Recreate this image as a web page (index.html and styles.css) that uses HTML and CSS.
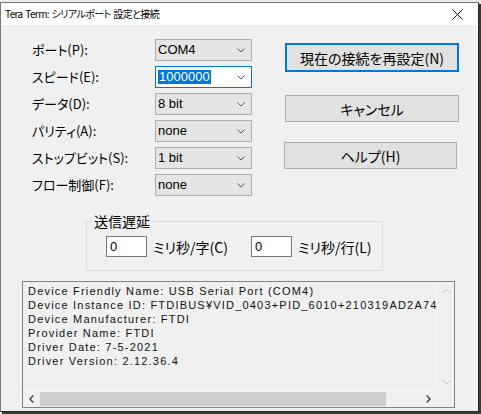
FILE: index.html
```html
<!DOCTYPE html>
<html lang="ja">
<head>
<meta charset="utf-8">
<title>Tera Term: シリアルポート 設定と接続</title>
<link rel="stylesheet" href="styles.css">
</head>
<body>
<div class="window">
  <div class="titlebar">
    <span class="title">Tera Term: シリアルポート 設定と接続</span>
    <svg class="close" width="11" height="11" viewBox="0 0 11 11"><path d="M0.5 0.5 L10.5 10.5 M10.5 0.5 L0.5 10.5" stroke="#111" stroke-width="1" fill="none"/></svg>
  </div>
  <div class="client">
    <div class="top">
      <div class="form">
        <span class="label">ポート(P):</span>
        <div class="combo"><span class="val">COM4</span><svg class="chev" width="8" height="5" viewBox="0 0 8 5"><path d="M0.5 0.5 L4 4 L7.5 0.5" stroke="#555" fill="none"/></svg></div>
        <span class="label">スピード(E):</span>
        <div class="combo edit"><span class="val"><span class="sel">1000000</span></span><svg class="chev" width="8" height="5" viewBox="0 0 8 5"><path d="M0.5 0.5 L4 4 L7.5 0.5" stroke="#555" fill="none"/></svg></div>
        <span class="label">データ(D):</span>
        <div class="combo"><span class="val">8 bit</span><svg class="chev" width="8" height="5" viewBox="0 0 8 5"><path d="M0.5 0.5 L4 4 L7.5 0.5" stroke="#555" fill="none"/></svg></div>
        <span class="label">パリティ(A):</span>
        <div class="combo"><span class="val">none</span><svg class="chev" width="8" height="5" viewBox="0 0 8 5"><path d="M0.5 0.5 L4 4 L7.5 0.5" stroke="#555" fill="none"/></svg></div>
        <span class="label">ストップビット(S):</span>
        <div class="combo"><span class="val">1 bit</span><svg class="chev" width="8" height="5" viewBox="0 0 8 5"><path d="M0.5 0.5 L4 4 L7.5 0.5" stroke="#555" fill="none"/></svg></div>
        <span class="label">フロー制御(F):</span>
        <div class="combo"><span class="val">none</span><svg class="chev" width="8" height="5" viewBox="0 0 8 5"><path d="M0.5 0.5 L4 4 L7.5 0.5" stroke="#555" fill="none"/></svg></div>
      </div>
      <div class="buttons">
        <div class="btn default">現在の接続を再設定(N)</div>
        <div class="btn cancel">キャンセル</div>
        <div class="btn help">ヘルプ(H)</div>
      </div>
    </div>
    <fieldset class="delay">
      <legend>送信遅延</legend>
      <div class="delay-row">
        <div class="num">0</div><span class="unit first">ミリ秒/字(C)</span>
        <div class="num second">0</div><span class="unit">ミリ秒/行(L)</span>
      </div>
    </fieldset>
    <div class="info">
      <div class="info-text">Device Friendly Name: USB Serial Port (COM4)
Device Instance ID: FTDIBUS¥VID_0403+PID_6010+210319AD2A74E
Device Manufacturer: FTDI
Provider Name: FTDI
Driver Date: 7-5-2021
Driver Version: 2.12.36.4</div>
      <div class="vscroll">
        <svg width="9" height="6" viewBox="0 0 9 6"><path d="M0.5 5 L4.5 1 L8.5 5" stroke="#c2c2c2" fill="none"/></svg>
        <svg width="9" height="6" viewBox="0 0 9 6"><path d="M0.5 1 L4.5 5 L8.5 1" stroke="#c2c2c2" fill="none"/></svg>
      </div>
      <div class="hscroll">
        <div class="harrow"><svg width="5" height="8" viewBox="0 0 5 8"><path d="M4.3 0.5 L1 4 L4.3 7.5" stroke="#404040" stroke-width="1.4" fill="none"/></svg></div>
        <div class="htrack"><div class="thumb"></div></div>
        <div class="harrow"><svg width="5" height="8" viewBox="0 0 5 8"><path d="M0.7 0.5 L4 4 L0.7 7.5" stroke="#404040" stroke-width="1.4" fill="none"/></svg></div>
      </div>
      <div class="corner"></div>
    </div>
  </div>
</div>
</body>
</html>
```
FILE: styles.css
```css
* { box-sizing: border-box; }
html, body { margin: 0; padding: 0; }
body {
  background: #ececec;
  font-family: "Noto Sans CJK JP", "Noto Sans", sans-serif;
  font-size: 13px;
  font-feature-settings: "palt";
  color: #000;
  width: 481px;
  height: 414px;
  overflow: hidden;
}
.window {
  margin-top: 2px;
  width: 479px;
  height: 410px;
  border: 1px solid #7a7a7a;
  border-right-color: #2b2b2b;
  border-bottom-color: #2b2b2b;
  box-shadow: 2px 2px 0 #3a3a3a;
  display: flex;
  flex-direction: column;
  background: #f0f0f0;
}
.titlebar {
  height: 22px;
  background: #fff;
  display: flex;
  align-items: center;
  justify-content: space-between;
  padding: 0 15px 0 4px;
  flex: none;
}
.title { font-size: 10px; line-height: 16px; letter-spacing: -0.6px; word-spacing: 1px; color: #000; }
.close { display: block; }
.client {
  flex: 1;
  background: #f0f0f0;
  display: flex;
  flex-direction: column;
}
.top {
  display: flex;
  padding: 14px 0 0 31px;
}
.form {
  display: grid;
  grid-template-columns: 123px 97px;
  grid-auto-rows: 22px;
  row-gap: 5px;
  align-items: center;
}
.label { line-height: 16px; white-space: nowrap; }
.combo {
  height: 22px;
  border: 1px solid #adadad;
  background: #e5e5e5;
  display: flex;
  align-items: center;
  justify-content: space-between;
  padding: 0 6px 0 2px;
  font-family: "Liberation Sans", "Noto Sans CJK JP", sans-serif;
}
.combo.edit {
  background: #fff;
  border-color: #0078d7;
  padding-left: 2px;
}
.val { line-height: 14px; white-space: nowrap; }
.sel { background: #0078d7; color: #fff; padding: 0 1px; display: inline-block; line-height: 14px; }
.chev { display: block; }
.buttons {
  margin-left: 33px;
  margin-top: 4px;
  display: flex;
  flex-direction: column;
  width: 174px;
}
.btn {
  height: 27px;
  border: 1px solid #adadad;
  background: #e1e1e1;
  display: flex;
  align-items: center;
  justify-content: center;
  line-height: 16px;
  font-size: 14px;
  white-space: nowrap;
}
.btn.default {
  height: 29px;
  border: 2px solid #0078d7;
}
.btn.cancel { margin-top: 23px; }
.btn.help { margin-top: 20px; width: 173px; margin-left: -1px; }
.delay {
  margin: 17px 0 0 85px;
  width: 297px;
  border: 1px solid #dcdcdc;
  padding: 7px 0 13px 19px;
}
.delay legend {
  font-size: 14px;
  line-height: 16px;
  padding: 0 1px;
  margin-left: -13px;
}
.delay-row {
  display: flex;
  align-items: center;
}
.num {
  width: 41px;
  height: 21px;
  background: #fff;
  border: 1px solid #7a7a7a;
  padding-left: 3px;
  line-height: 19px;
  font-family: "Liberation Sans", sans-serif;
}
.num.second { margin-left: 20px; }
.unit { margin-left: 6px; line-height: 16px; white-space: nowrap; font-size: 14px; }
.unit.first { width: 78px; }
.info {
  margin: 10px 0 0 21px;
  width: 433px;
  height: 127px;
  border: 1px solid #828282;
  display: grid;
  grid-template-columns: 1fr 17px;
  grid-template-rows: 1fr 17px;
  background: #f0f0f0;
}
.info-text {
  white-space: pre;
  overflow: hidden;
  padding: 2px 0 0 5px;
  line-height: 14px;
  font-family: "Liberation Sans", "Noto Sans CJK JP", sans-serif;
  font-size: 11px;
  letter-spacing: 1.2px;
  font-feature-settings: normal;
  color: #111;
}
.vscroll {
  background: #f0f0f0;
  border-left: 1px solid #f7f7f7;
  display: flex;
  flex-direction: column;
  justify-content: space-between;
  align-items: center;
  padding: 6px 0 5px;
}
.vscroll svg { display: block; }
.hscroll {
  display: flex;
  background: #f0f0f0;
  border-top: 1px solid #f7f7f7;
}
.harrow {
  width: 17px;
  flex: none;
  display: flex;
  align-items: center;
  justify-content: center;
}
.harrow svg { display: block; }
.htrack { flex: 1; display: flex; padding: 1px 0; }
.thumb { width: 346px; background: #cdcdcd; }
.corner { background: #f0f0f0; }
```
